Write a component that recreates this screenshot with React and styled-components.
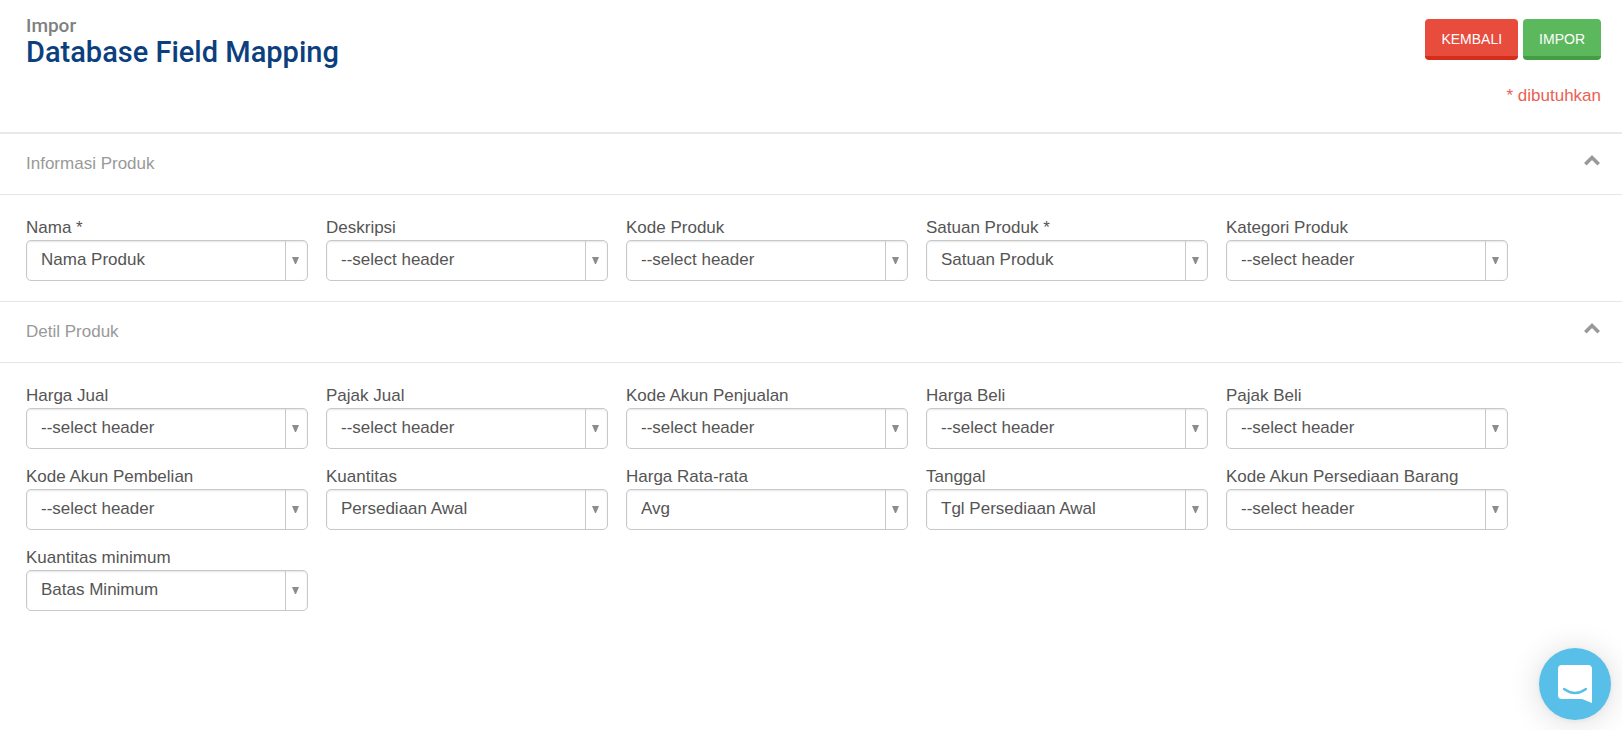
import React, { useState } from 'react'
import styled, { createGlobalStyle } from 'styled-components'

const GlobalStyle = createGlobalStyle`
  *, *::before, *::after {
    box-sizing: border-box;
  }

  body {
    margin: 0;
    background: #fff;
    color: #555;
    font-family: "Liberation Sans", Arial, sans-serif;
    font-size: 17px;
    line-height: 20px;
  }
`

const Header = styled.header`
  display: flex;
  justify-content: space-between;
  align-items: flex-start;
  height: 134px;
  padding: 16px 21px 0 26px;
  border-bottom: 2px solid #e7eaed;
`

const Titles = styled.div`
  font-family: Roboto, sans-serif;
  font-weight: 500;
`

const Subtitle = styled.p`
  margin: 0;
  color: #808080;
  font-size: 19px;
  line-height: 20px;
`

const Title = styled.h1`
  margin: 0;
  color: #0c3f7e;
  font-size: 29px;
  font-weight: 500;
  line-height: 32px;
`

const Actions = styled.div`
  display: flex;
  flex-direction: column;
  align-items: flex-end;
  gap: 26px;
  padding-top: 3px;
`

const ButtonRow = styled.div`
  display: flex;
  gap: 5px;
`

const Button = styled.button`
  height: 41px;
  padding: 2px 16px 0;
  border: 0;
  border-bottom: 4px solid ${props => props.$edge};
  border-radius: 4px;
  background: ${props => props.$color};
  color: #fff;
  font: 14px "Liberation Sans", Arial, sans-serif;
  text-transform: uppercase;
  cursor: pointer;
`

const Required = styled.span`
  color: #ea6153;
`

const SectionHeading = styled.h2`
  margin: 0;
  border-bottom: 1px solid #e7e7e7;
  font-size: 17px;
  font-weight: 400;
`

const SectionToggle = styled.button`
  display: flex;
  justify-content: space-between;
  align-items: flex-start;
  width: 100%;
  height: 60px;
  padding: 20px 21px 0 26px;
  border: 0;
  background: none;
  color: #999;
  font: inherit;
  line-height: 20px;
  cursor: pointer;
`

const Chevron = styled.svg`
  width: 18px;
  height: 14px;
  transform: ${props => (props.$open ? 'none' : 'rotate(180deg)')};
`

const Fields = styled.div`
  display: grid;
  grid-template-columns: repeat(auto-fill, 282px);
  gap: 18px;
  padding: 23px 26px 20px;
  border-bottom: ${props => (props.$last ? '0' : '1px solid #e7e7e7')};
`

const FieldBox = styled.div`
  display: flex;
  flex-direction: column;
  gap: 2px;
`

const SelectBox = styled.div`
  display: grid;
  grid-template-columns: 1fr 23px;
  height: 41px;
`

const Select = styled.select`
  grid-area: 1 / 1 / 2 / 3;
  width: 100%;
  padding: 0 30px 2px 14px;
  appearance: none;
  border: 1px solid #c8c8c8;
  border-radius: 5px;
  background: #fff;
  box-shadow: inset 0 1px 2px rgba(0, 0, 0, .1);
  color: #555;
  font: inherit;
`

const Arrow = styled.span`
  grid-area: 1 / 2 / 2 / 3;
  z-index: 1;
  display: flex;
  align-items: center;
  justify-content: center;
  margin: 1px 1px 1px 0;
  padding: 0 2px 1px 0;
  border-left: 1px solid #c8c8c8;
  pointer-events: none;
`

const ChatButton = styled.button`
  position: fixed;
  right: 11px;
  bottom: 10px;
  width: 72px;
  height: 72px;
  padding: 0;
  border: 0;
  border-radius: 50%;
  background: #58c0e8;
  box-shadow: 0 1px 6px rgba(0, 0, 0, .06), 0 2px 32px rgba(0, 0, 0, .14);
  cursor: pointer;
`

const EMPTY = '--select header'
const HEADERS = ['Nama Produk', 'Satuan Produk', 'Persediaan Awal', 'Avg', 'Tgl Persediaan Awal', 'Batas Minimum']

const productFields = [
  { id: 'name', label: 'Nama *', value: 'Nama Produk' },
  { id: 'description', label: 'Deskripsi' },
  { id: 'code', label: 'Kode Produk' },
  { id: 'unit', label: 'Satuan Produk *', value: 'Satuan Produk' },
  { id: 'category', label: 'Kategori Produk' }
]

const detailFields = [
  { id: 'sell-price', label: 'Harga Jual' },
  { id: 'sell-tax', label: 'Pajak Jual' },
  { id: 'sell-account', label: 'Kode Akun Penjualan' },
  { id: 'buy-price', label: 'Harga Beli' },
  { id: 'buy-tax', label: 'Pajak Beli' },
  { id: 'buy-account', label: 'Kode Akun Pembelian' },
  { id: 'quantity', label: 'Kuantitas', value: 'Persediaan Awal' },
  { id: 'average-price', label: 'Harga Rata-rata', value: 'Avg' },
  { id: 'date', label: 'Tanggal', value: 'Tgl Persediaan Awal' },
  { id: 'inventory-account', label: 'Kode Akun Persediaan Barang' },
  { id: 'min-quantity', label: 'Kuantitas minimum', value: 'Batas Minimum' }
]

const Field = ({ id, label, value = EMPTY }) => {
  const [selected, setSelected] = useState(value)

  return (
    <FieldBox>
      <label htmlFor={id}>{label}</label>
      <SelectBox>
        <Select id={id} value={selected} onChange={e => setSelected(e.target.value)}>
          {[EMPTY, ...HEADERS].map(header => <option key={header}>{header}</option>)}
        </Select>
        <Arrow>
          <svg width="7" height="7" viewBox="0 0 7 7" aria-hidden="true">
            <path d="M0 0h7L4 7H3z" fill="#8c8c8c" />
          </svg>
        </Arrow>
      </SelectBox>
    </FieldBox>
  )
}

const Section = ({ title, fields, last }) => {
  const [open, setOpen] = useState(true)

  return (
    <section>
      <SectionHeading>
        <SectionToggle type="button" aria-expanded={open} onClick={() => setOpen(!open)}>
          {title}
          <Chevron $open={open} viewBox="0 0 18 14" aria-hidden="true">
            <path d="M2.300 10.300 9 3.600l6.700 6.700" fill="none" stroke="#999" strokeWidth="3.600" />
          </Chevron>
        </SectionToggle>
      </SectionHeading>
      {open && (
        <Fields $last={last}>
          {fields.map(field => <Field key={field.id} {...field} />)}
        </Fields>
      )}
    </section>
  )
}

const App = () => {
  return (
    <>
      <GlobalStyle />
      <Header>
        <Titles>
          <Subtitle>Impor</Subtitle>
          <Title>Database Field Mapping</Title>
        </Titles>
        <Actions>
          <ButtonRow>
            <Button type="button" $color="#e74c3c" $edge="#d62c1a">Kembali</Button>
            <Button type="button" $color="#5cb85c" $edge="#449d44">Impor</Button>
          </ButtonRow>
          <Required>* dibutuhkan</Required>
        </Actions>
      </Header>
      <main>
        <Section title="Informasi Produk" fields={productFields} />
        <Section title="Detil Produk" fields={detailFields} last />
      </main>
      <ChatButton type="button" aria-label="Chat">
        <svg width="72" height="72" viewBox="0 0 72 72" aria-hidden="true">
          <path d="M23 17h26a4 4 0 0 1 4 4v34l-10-4H23a4 4 0 0 1-4-4V21a4 4 0 0 1 4-4z" fill="#fff" />
          <path d="M25 41q11 8 22 0" fill="none" stroke="#58c0e8" strokeWidth="2.4" strokeLinecap="round" />
        </svg>
      </ChatButton>
    </>
  )
}

export default App
